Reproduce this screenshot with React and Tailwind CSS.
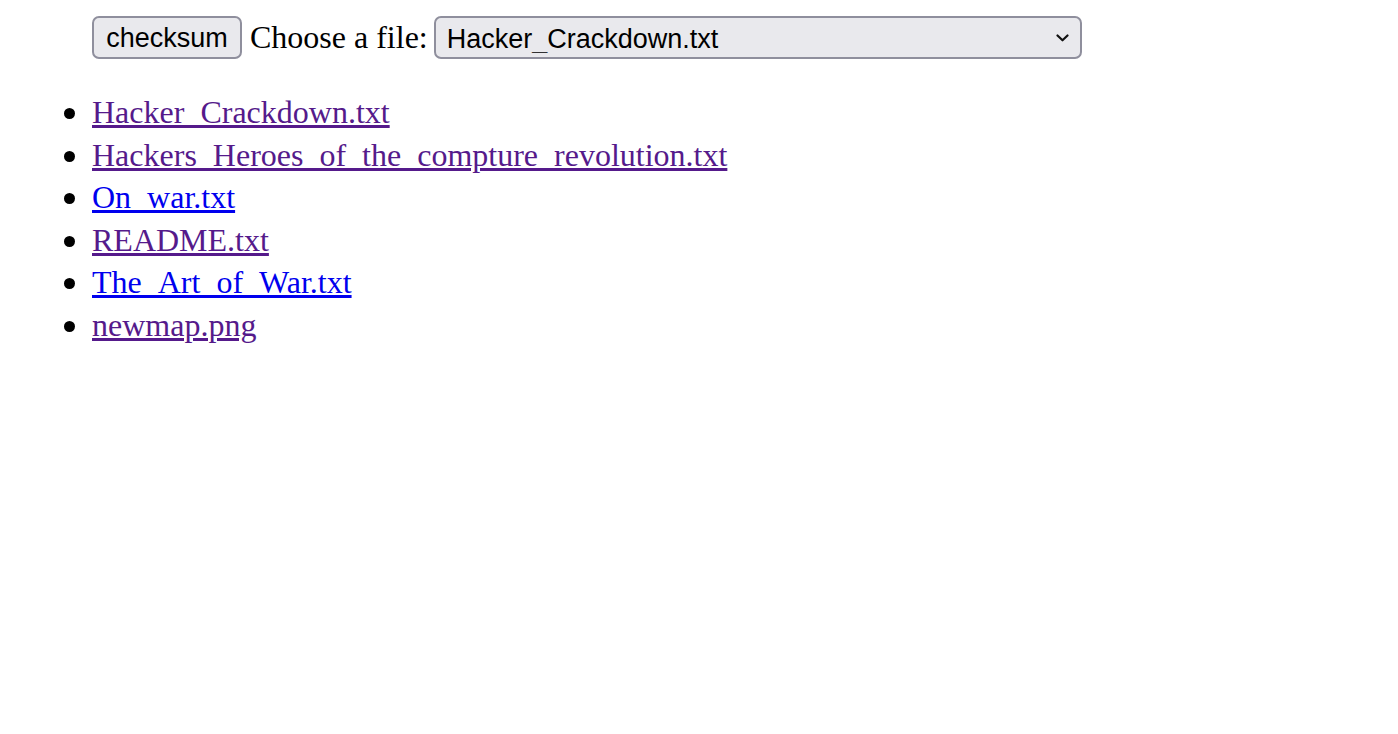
import { useState } from "react";

const FILES = [
  { name: "Hacker_Crackdown.txt", visited: true },
  { name: "Hackers_Heroes_of_the_compture_revolution.txt", visited: true },
  { name: "On_war.txt", visited: false },
  { name: "README.txt", visited: true },
  { name: "The_Art_of_War.txt", visited: false },
  { name: "newmap.png", visited: true },
];

export default function App() {
  const [selected, setSelected] = useState(FILES[0].name);

  return (
    <div className="min-h-screen bg-white text-black font-['Liberation_Serif',serif]">
      {/* checksum form */}
      <div className="flex items-center pl-[92px] pt-[16px]">
        <button
          type="button"
          className="h-[43px] w-[150px] rounded-[7px] border-2 border-[#8f8f9d] bg-[#e9e9ed] pt-[2px] text-[27px] leading-none text-black font-['Liberation_Sans',Arial,sans-serif]"
        >
          checksum
        </button>
        <span className="ml-[8px] text-[32px] leading-[43px]">Choose a file:</span>
        <div className="relative ml-[6px]">
          <select
            value={selected}
            onChange={(e) => setSelected(e.target.value)}
            className="h-[43px] w-[648px] appearance-none rounded-[7px] border-2 border-[#8f8f9d] bg-[#e9e9ed] pl-[11px] pr-[40px] pt-[3px] text-[27px] leading-none text-black font-['Liberation_Sans',Arial,sans-serif]"
          >
            {FILES.map((f) => (
              <option key={f.name} value={f.name}>
                {f.name}
              </option>
            ))}
          </select>
          <svg
            className="pointer-events-none absolute right-[13px] top-[18px]"
            width="13"
            height="8"
            viewBox="0 0 13 8"
            fill="none"
          >
            <path d="M1.5 1.5 L6.5 6.3 L11.5 1.5" stroke="#111" strokeWidth="2.2" strokeLinecap="round" strokeLinejoin="round" />
          </svg>
        </div>
      </div>

      {/* file list */}
      <ul className="mt-[32px] pl-[64px]">
        {FILES.map((f) => (
          <li key={f.name} className="flex items-start h-[42.5px]">
            <span className="mt-[17px] mr-[17px] h-[11px] w-[11px] shrink-0 rounded-full bg-black" />
            <a
              href="#"
              className={`text-[32px] leading-[42.5px] underline ${f.visited ? "text-[#551a8b]" : "text-[#0000ee]"}`}
            >
              {f.name}
            </a>
          </li>
        ))}
      </ul>
    </div>
  );
}
